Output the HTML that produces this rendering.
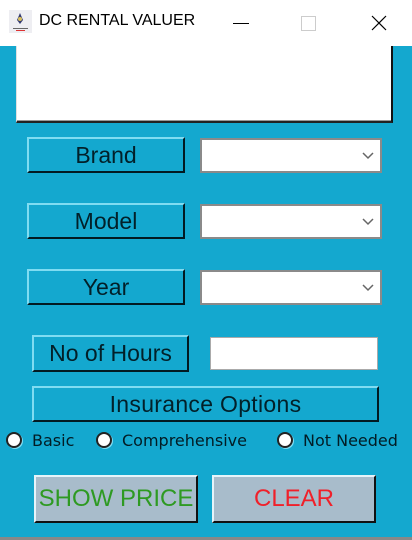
<!DOCTYPE html>
<html><head><meta charset="utf-8"><style>
*{margin:0;padding:0;box-sizing:border-box}
body{width:412px;height:540px;background:#14a8cf;position:relative;overflow:hidden;font-family:"Liberation Sans",sans-serif}
.abs{position:absolute}
.title{left:0;top:0;width:412px;height:46px;background:#fff}
.btn{position:absolute;background:#14a8cf;border-top:2px solid #7fdcf2;border-left:2px solid #7fdcf2;border-right:2px solid #021a22;border-bottom:2px solid #021a22;color:#022029;font-size:23px;text-align:center;display:flex;align-items:center;justify-content:center}
.combo{position:absolute;background:#fff;border:2px solid #8a8a8a;height:35px;width:182px;left:200px}
.combo svg{position:absolute;right:6px;top:12px}
.radio{position:absolute;top:432px;width:16px;height:16px;border-radius:50%;background:#fff;border:2px solid #222;box-shadow:1px 1px 0 #7fdcf2}
.rl{position:absolute;top:431px;font-family:"DejaVu Sans",sans-serif;font-size:16px;color:#021c25}
.big{position:absolute;top:475px;height:48px;width:164px;background:#a8bccb;border-top:2px solid #e6f4fa;border-left:2px solid #e6f4fa;border-right:2px solid #111;border-bottom:2px solid #111;font-size:24px;display:flex;align-items:center;justify-content:center}
</style></head><body>
<div class="abs title"></div>
<div class="abs" style="left:9px;top:10px;width:23px;height:23px;background:#eeeef2">
<svg width="23" height="23"><path d="M11 3 L14 10 L11 14 L8 10Z" fill="#333a70"/><circle cx="11" cy="9" r="2" fill="#d8c060"/><rect x="4" y="18" width="15" height="1" fill="#666"/><rect x="7" y="20" width="9" height="1" fill="#d33"/></svg></div>
<div class="abs" style="left:39px;top:12px;font-size:16px;color:#000">DC RENTAL VALUER</div>
<div class="abs" style="left:233px;top:23px;width:16px;height:1px;background:#000"></div>
<div class="abs" style="left:301px;top:16px;width:15px;height:15px;border:1px solid #ccc"></div>
<svg class="abs" style="left:371px;top:15px" width="16" height="16"><path d="M1 1L15 15M15 1L1 15" stroke="#000" stroke-width="1.2"/></svg>
<div class="abs" style="left:16px;top:46px;width:377px;height:77px;background:#fff;border-left:1px solid #e0e0e0;border-right:2px solid #111;border-bottom:2px solid #222;box-shadow:inset 0 -1px 0 #999"></div>
<div class="btn" style="left:27px;top:137px;width:158px;height:36px">Brand</div>
<div class="btn" style="left:27px;top:203px;width:158px;height:36px">Model</div>
<div class="btn" style="left:27px;top:269px;width:158px;height:36px">Year</div>
<div class="combo" style="top:138px"><svg width="12" height="8"><path d="M1 1L6 6L11 1" stroke="#666" stroke-width="1.5" fill="none"/></svg></div>
<div class="combo" style="top:204px"><svg width="12" height="8"><path d="M1 1L6 6L11 1" stroke="#666" stroke-width="1.5" fill="none"/></svg></div>
<div class="combo" style="top:270px"><svg width="12" height="8"><path d="M1 1L6 6L11 1" stroke="#666" stroke-width="1.5" fill="none"/></svg></div>
<div class="btn" style="left:32px;top:335px;width:157px;height:37px">No of Hours</div>
<div class="abs" style="left:210px;top:337px;width:168px;height:33px;background:#fff;border:1px solid #aaa"></div>
<div class="btn" style="left:32px;top:386px;width:347px;height:36px;letter-spacing:0.3px">Insurance Options</div>
<div class="radio" style="left:6px"></div><div class="rl" style="left:32px">Basic</div>
<div class="radio" style="left:96px"></div><div class="rl" style="left:122px">Comprehensive</div>
<div class="radio" style="left:277px"></div><div class="rl" style="left:303px">Not Needed</div>
<div class="big" style="left:34px;color:#2e9a22">SHOW PRICE</div>
<div class="big" style="left:212px;color:#f0202a">CLEAR</div>
<div class="abs" style="left:0;top:537px;width:412px;height:3px;background:#888"></div>
</body></html>
